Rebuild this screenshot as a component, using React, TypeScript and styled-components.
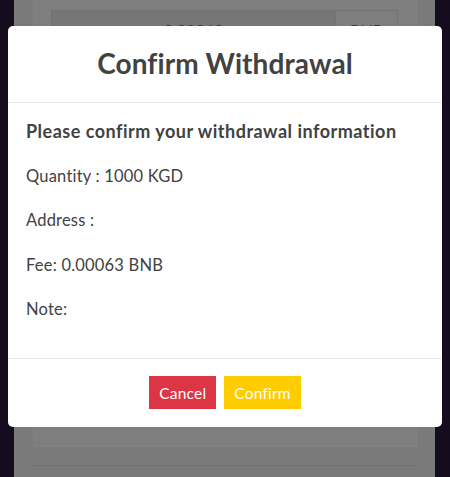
import React from "react";
import styled, { createGlobalStyle } from "styled-components";

const Global = createGlobalStyle`
  html, body { margin: 0; padding: 0; }
  body {
    background: #150c1e;
    font-family: "Lato", "Noto Sans", sans-serif;
    overflow: hidden;
  }
  #root { height: 477px; }
`;

const Page = styled.div`
  position: relative;
  height: 477px;
  overflow: hidden;
`;

const Panel = styled.div`
  margin: 0 15px 0 14px;
  height: 100%;
  background: #7a7a7a;
  padding: 0 18px 0 19px;
  display: flex;
  flex-direction: column;
`;

const Card = styled.div`
  height: 447px;
  background: #7e7e7e;
  border: 1px solid #818181;
  border-top: none;
  padding: 10px 18px 0 17px;
  box-sizing: border-box;
`;

const Rule = styled.div`
  margin-top: 18px;
  height: 1px;
  background: #727272;
`;

const InputGroup = styled.div`
  display: flex;
  height: 38px;
  border: 1px solid #727272;
`;

const InputField = styled.div`
  flex: 1;
  background: #767676;
  color: #3a3a3a;
  font-size: 16px;
  text-align: center;
  line-height: 38px;
`;

const Addon = styled.div`
  width: 61px;
  background: #7e7e7e;
  border-left: 1px solid #727272;
  color: #3a3a3a;
  font-size: 16px;
  text-align: center;
  line-height: 38px;
`;

const Modal = styled.div`
  position: absolute;
  left: 8px;
  top: 26px;
  width: 434px;
  background: #fff;
  border-radius: 5px;
  display: flex;
  flex-direction: column;
  color: #424242;
`;

const Header = styled.div`
  height: 76px;
  border-bottom: 1px solid #e8e8e8;
  display: flex;
  align-items: center;
  justify-content: center;
`;

const Title = styled.h2`
  margin: 0;
  font-size: 28px;
  font-weight: 700;
  letter-spacing: 0.1px;
  color: #424242;
  padding-bottom: 2px;
`;

const Body = styled.div`
  display: flex;
  flex-direction: column;
  gap: 20px;
  padding: 16px 18px 36px;
`;

const Line = styled.p<{ $bold?: boolean }>`
  margin: 0;
  font-size: ${(p) => (p.$bold ? "18px" : "16.5px")};
  font-weight: ${(p) => (p.$bold ? 700 : 400)};
  letter-spacing: ${(p) => (p.$bold ? "0.5px" : "0.2px")};
  line-height: 24.5px;
`;

const Footer = styled.div`
  border-top: 1px solid #e8e8e8;
  height: 68px;
  display: flex;
  align-items: center;
  justify-content: center;
  gap: 8px;
`;

const Button = styled.button<{ $variant: "danger" | "warning" }>`
  height: 33px;
  padding: 0 10px;
  border: none;
  border-radius: 0;
  font-family: inherit;
  font-size: 15.5px;
  letter-spacing: 0.2px;
  color: #fff;
  background: ${(p) => (p.$variant === "danger" ? "#dc3545" : "#ffcc00")};
`;

export default function App() {
  return (
    <Page>
      <Global />
      <Panel>
        <Card>
          <InputGroup>
            <InputField>0.00063</InputField>
            <Addon>BNB</Addon>
          </InputGroup>
        </Card>
        <Rule />
      </Panel>
      <Modal>
        <Header>
          <Title>Confirm Withdrawal</Title>
        </Header>
        <Body>
          <Line $bold>Please confirm your withdrawal information</Line>
          <Line>Quantity : 1000 KGD</Line>
          <Line>Address :</Line>
          <Line>Fee: 0.00063 BNB</Line>
          <Line>Note:</Line>
        </Body>
        <Footer>
          <Button $variant="danger">Cancel</Button>
          <Button $variant="warning">Confirm</Button>
        </Footer>
      </Modal>
    </Page>
  );
}
